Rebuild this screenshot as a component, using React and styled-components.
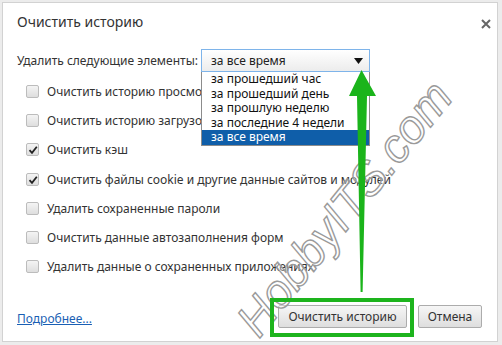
import React from "react";
import styled, { createGlobalStyle } from "styled-components";

const GlobalStyle = createGlobalStyle`
  html, body { margin: 0; padding: 0; background: #ececec; }
  body { font-family: "Noto Sans", "Open Sans", "DejaVu Sans", sans-serif; }
  * { box-sizing: border-box; }
`;

const Page = styled.div`
  position: relative;
  width: 502px;
  height: 345px;
  padding: 2px 4px 3px 2px;
  background: #ececec;
  overflow: hidden;
`;

const Dialog = styled.div`
  position: relative;
  height: 100%;
  background: #fff;
  border: 1px solid #d2d2d2;
  padding: 9px 15px 0 14px;
  display: flex;
  flex-direction: column;
  color: #333;
`;

const TitleBar = styled.div`
  display: flex;
  align-items: center;
  justify-content: space-between;
  height: 20px;
`;

const Title = styled.div`
  font-size: 14px;
  line-height: 20px;
  color: #333;
`;

const Close = styled.svg`
  width: 10px;
  height: 10px;
  margin-right: -9px;
  margin-top: 4px;
`;

const SelectRow = styled.div`
  display: flex;
  align-items: center;
  margin-top: 17px;
  font-size: 12px;
`;

const Label = styled.span`
  width: 184px;
  white-space: nowrap;
`;

const SelectWrap = styled.div`
  position: relative;
  width: 169px;
`;

const SelectBox = styled.div`
  height: 23px;
  border: 1px solid #7eb4ea;
  background: linear-gradient(#ffffff, #ececec);
  display: flex;
  align-items: center;
  justify-content: space-between;
  padding: 0 6px 0 9px;
  font-size: 12px;
  color: #222;
`;

const Caret = styled.svg`
  width: 9px;
  height: 6px;
`;

const List = styled.ul`
  position: absolute;
  top: 23px;
  left: 0;
  width: 169px;
  margin: 0;
  padding: 0;
  list-style: none;
  background: #fff;
  border: 1px solid #8c8c8c;
  border-top: none;
  z-index: 2;
`;

const Item = styled.li`
  height: 14.6px;
  line-height: 14.6px;
  padding-left: 9px;
  font-size: 12px;
  color: ${(p) => (p.$selected ? "#fff" : "#111")};
  background: ${(p) => (p.$selected ? "#0f5ea9" : "transparent")};
`;

const Options = styled.div`
  display: flex;
  flex-direction: column;
  margin-top: 5px;
`;

const Row = styled.div`
  display: flex;
  align-items: center;
  gap: 8px;
  height: 29.2px;
  padding-left: 9px;
  font-size: 12px;
  color: #333;
  white-space: nowrap;
`;

const Box = styled.span`
  position: relative;
  width: 13px;
  height: 13px;
  flex: none;
  border: 1px solid #bcbcbc;
  border-radius: 2px;
  background: linear-gradient(#f4f4f4, #dedede);
`;

const Tick = styled.svg`
  position: absolute;
  left: 1px;
  top: 1px;
  width: 10px;
  height: 10px;
`;

const Footer = styled.div`
  display: flex;
  align-items: center;
  margin-top: 24px;
  height: 23px;
`;

const Link = styled.a`
  font-size: 12px;
  color: #1a5fb4;
  text-decoration: underline;
  margin-top: 3px;
  margin-right: auto;
`;

const Button = styled.button`
  height: 23px;
  width: ${(p) => p.$w}px;
  margin-left: ${(p) => p.$ml || 0}px;
  border: 1px solid #acacac;
  border-radius: 2px;
  background: linear-gradient(#f6f6f6, #dedede);
  font-family: inherit;
  font-size: 12px;
  color: #333;
  padding: 0;
`;

const Highlight = styled.div`
  position: absolute;
  left: 270px;
  top: 298px;
  width: 144px;
  height: 39px;
  border: 4px solid #1db41d;
  z-index: 5;
  pointer-events: none;
`;

const Overlay = styled.svg`
  position: absolute;
  left: 0;
  top: 0;
  width: 502px;
  height: 345px;
  z-index: 4;
  pointer-events: none;
`;

const Watermark = styled.div`
  position: absolute;
  left: 344px;
  top: 208px;
  transform: translate(-50%, -50%) rotate(-51deg);
  font-family: "Liberation Sans", Arial, sans-serif;
  font-style: italic;
  font-size: 47px;
  white-space: nowrap;
  color: rgba(255, 255, 255, 0.35);
  -webkit-text-stroke: 1.4px #9a9a9a;
  z-index: 3;
  pointer-events: none;
`;

const items = [
  "за прошедший час",
  "за прошедший день",
  "за прошлую неделю",
  "за последние 4 недели",
  "за все время",
];

const rows = [
  ["Очистить историю просмотров", false],
  ["Очистить историю загрузок", false],
  ["Очистить кэш", true],
  ["Очистить файлы cookie и другие данные сайтов и модулей", true],
  ["Удалить сохраненные пароли", false],
  ["Очистить данные автозаполнения форм", false],
  ["Удалить данные о сохраненных приложениях", false],
];

export default function App() {
  return (
    <>
      <GlobalStyle />
      <Page>
        <Dialog>
          <TitleBar>
            <Title>Очистить историю</Title>
            <Close viewBox="0 0 10 10">
              <path d="M1 1 L9 9 M9 1 L1 9" stroke="#666" strokeWidth="2" />
            </Close>
          </TitleBar>
          <SelectRow>
            <Label>Удалить следующие элементы:</Label>
            <SelectWrap>
              <SelectBox>
                <span>за все время</span>
                <Caret viewBox="0 0 9 6">
                  <path d="M0 0 H9 L4.5 6 Z" fill="#111" />
                </Caret>
              </SelectBox>
              <List>
                {items.map((t, i) => (
                  <Item key={t} $selected={i === items.length - 1}>
                    {t}
                  </Item>
                ))}
              </List>
            </SelectWrap>
          </SelectRow>
          <Options>
            {rows.map(([t, c]) => (
              <Row key={t}>
                <Box>
                  {c && (
                    <Tick viewBox="0 0 10 10">
                      <path
                        d="M1.5 5.2 L4 7.8 L8.8 1.8"
                        fill="none"
                        stroke="#222"
                        strokeWidth="1.8"
                      />
                    </Tick>
                  )}
                </Box>
                <span>{t}</span>
              </Row>
            ))}
          </Options>
          <Footer>
            <Link href="#">Подробнее...</Link>
            <Button $w={129}>Очистить историю</Button>
            <Button $w={64} $ml={11}>Отмена</Button>
          </Footer>
        </Dialog>
        <Watermark>HobbyITS.com</Watermark>
        <Overlay viewBox="0 0 502 345">
          <polygon
            points="361.5,70 376,96 367,96 362.6,292 360.6,292 357,96 349,96"
            fill="#1bb41b"
          />
        </Overlay>
        <Highlight />
      </Page>
    </>
  );
}
